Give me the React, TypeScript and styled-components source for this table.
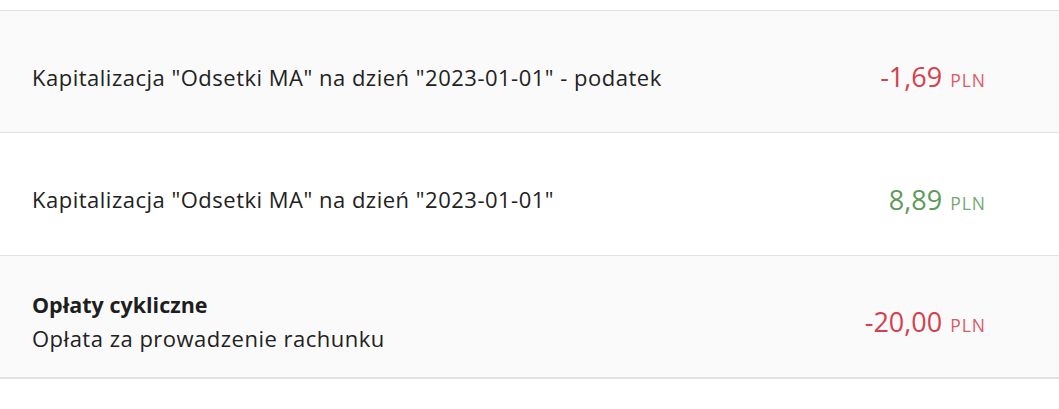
import React from "react";
import styled, { createGlobalStyle } from "styled-components";

const Global = createGlobalStyle`
  html, body { margin: 0; padding: 0; background: #ffffff; }
  body { font-family: "Open Sans", Lato, sans-serif; }
`;

const List = styled.div`
  display: flex;
  flex-direction: column;
  padding-top: 10px;
`;

const Row = styled.div<{ $shade: boolean; $h: number }>`
  display: flex;
  align-items: center;
  justify-content: space-between;
  height: ${(p) => p.$h}px;
  box-sizing: border-box;
  padding: 10px 74px 0 32px;
  background: ${(p) => (p.$shade ? "#fafafa" : "#ffffff")};
  border-top: 1px solid #e2e2e2;
  &:last-child { border-bottom: 2px solid #e2e2e2; }
`;

const Texts = styled.div`
  display: flex;
  flex-direction: column;
  gap: 3px;
`;

const Title = styled.div`
  font-size: 21.5px;
  line-height: 30px;
  font-weight: 700;
  color: #1e1e1e;
`;

const Label = styled.div`
  font-size: 22px;
  line-height: 30px;
  color: #222222;
  letter-spacing: 0.5px;
`;

const Amount = styled.div<{ $tone: "neg" | "pos" }>`
  display: flex;
  align-items: baseline;
  gap: 8px;
  color: ${(p) => (p.$tone === "neg" ? "#d5404e" : "#5e9a5a")};
`;

const Value = styled.span`
  font-size: 27px;
`;

const Currency = styled.span`
  font-size: 17.5px;
  letter-spacing: 1px;
  margin-right: -1px;
  opacity: 0.85;
`;

type Item = { title?: string; label: string; value: string; tone: "neg" | "pos"; h: number };

const items: Item[] = [
  { label: 'Kapitalizacja "Odsetki MA" na dzień "2023-01-01" - podatek', value: "-1,69", tone: "neg", h: 122 },
  { label: 'Kapitalizacja "Odsetki MA" na dzień "2023-01-01"', value: "8,89", tone: "pos", h: 123 },
  { title: "Opłaty cykliczne", label: "Opłata za prowadzenie rachunku", value: "-20,00", tone: "neg", h: 124 },
];

export default function App() {
  return (
    <>
      <Global />
      <List>
        {items.map((it, i) => (
          <Row key={i} $shade={i % 2 === 0} $h={it.h}>
            <Texts>
              {it.title && <Title>{it.title}</Title>}
              <Label>{it.label}</Label>
            </Texts>
            <Amount $tone={it.tone}>
              <Value>{it.value}</Value>
              <Currency>PLN</Currency>
            </Amount>
          </Row>
        ))}
      </List>
    </>
  );
}
